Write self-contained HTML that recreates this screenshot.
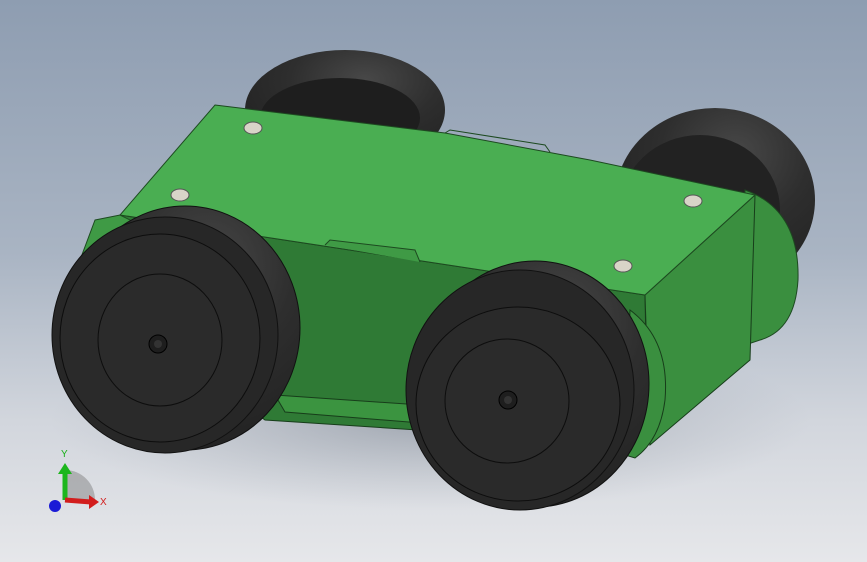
<!DOCTYPE html>
<html><head><meta charset="utf-8"><style>
html,body{margin:0;padding:0;width:867px;height:562px;overflow:hidden}
body{background:linear-gradient(180deg,#8e9db1 0%,#a9b4c3 45%,#d2d6dd 75%,#e6e7ea 100%)}
svg{position:absolute;left:0;top:0}
</style></head><body>
<svg width="867" height="562" viewBox="0 0 867 562" xmlns="http://www.w3.org/2000/svg" font-family="Liberation Sans, sans-serif">
<defs>
<radialGradient id="sh" cx="50%" cy="50%" r="50%"><stop offset="0" stop-color="#7f8793" stop-opacity=".6"/><stop offset="1" stop-color="#9aa2ad" stop-opacity="0"/></radialGradient>
<radialGradient id="tire" cx="60%" cy="25%" r="75%"><stop offset="0" stop-color="#484848"/><stop offset=".5" stop-color="#2e2e2e"/><stop offset="1" stop-color="#222"/></radialGradient>
</defs>
<ellipse cx="430" cy="420" rx="380" ry="90" fill="url(#sh)"/>
<!-- back left wheel -->
<ellipse cx="345" cy="110" rx="100" ry="60" fill="url(#tire)"/>
<ellipse cx="340" cy="118" rx="80" ry="40" fill="#1e1e1e"/>
<!-- back right wheel -->
<ellipse cx="715" cy="200" rx="100" ry="92" fill="url(#tire)"/>
<ellipse cx="700" cy="210" rx="80" ry="75" fill="#222"/>
<!-- right side panel -->
<path d="M745 190 Q800 210 798 280 Q795 330 760 340 L745 345 Z" fill="#3a8f3f" stroke="#1d4a20"/>
<!-- body side (front face) -->
<path d="M120 215 L645 295 L648 445 L265 420 L100 300 Z" fill="#2f7a35" stroke="#173d1a"/>
<!-- body right face -->
<path d="M645 295 L755 195 L750 360 L650 445 Z" fill="#3a8f3f" stroke="#173d1a"/>
<!-- body top -->
<path d="M215 105 L420 130 L445 133 L590 160 L755 195 L645 295 L120 215 Z" fill="#4aae52" stroke="#1d4a20"/>
<path d="M445 133 L450 130 L545 145 L550 152" fill="none" stroke="#1d4a20"/>
<path d="M325 245 L330 240 L415 250 L420 262" fill="#3f9a45" stroke="#1d4a20"/>
<!-- left wing -->
<path d="M95 220 L120 215 L140 225 L90 300 L80 260 Z" fill="#3f9a45" stroke="#1d4a20"/>
<!-- screws -->
<g fill="#d8d4c8" stroke="#555">
<ellipse cx="253" cy="128" rx="9" ry="6"/><ellipse cx="180" cy="195" rx="9" ry="6"/>
<ellipse cx="693" cy="201" rx="9" ry="6"/><ellipse cx="623" cy="266" rx="9" ry="6"/>
</g>
<!-- bottom tab -->
<path d="M275 395 L640 420 L630 440 L285 412 Z" fill="#3b9440" stroke="#173d1a"/>
<path d="M630 310 Q670 340 665 400 Q660 440 635 458 L625 455 Z" fill="#3a8f3f" stroke="#173d1a"/>
<!-- front left wheel -->
<ellipse cx="185" cy="328" rx="115" ry="122" fill="url(#tire)" stroke="#111"/>
<ellipse cx="165" cy="335" rx="113" ry="118" fill="#272727" stroke="#111"/>
<ellipse cx="160" cy="338" rx="100" ry="104" fill="#2a2a2a" stroke="#0d0d0d"/>
<ellipse cx="160" cy="340" rx="62" ry="66" fill="#2b2b2b" stroke="#0d0d0d"/>
<ellipse cx="158" cy="344" rx="9" ry="9" fill="#1e1e1e" stroke="#000"/>
<ellipse cx="158" cy="344" rx="4" ry="4" fill="#333"/>
<!-- front right wheel -->
<ellipse cx="535" cy="384" rx="114" ry="123" fill="url(#tire)" stroke="#111"/>
<ellipse cx="520" cy="390" rx="114" ry="120" fill="#272727" stroke="#111"/>
<ellipse cx="518" cy="404" rx="102" ry="97" fill="#2a2a2a" stroke="#0d0d0d"/>
<ellipse cx="507" cy="401" rx="62" ry="62" fill="#2b2b2b" stroke="#0d0d0d"/>
<ellipse cx="508" cy="400" rx="9" ry="9" fill="#1e1e1e" stroke="#000"/>
<ellipse cx="508" cy="400" rx="4" ry="4" fill="#333"/>
<!-- triad -->
<path d="M65 500 L65 470 A30 30 0 0 1 95 500 Z" fill="#777" opacity=".45"/>
<line x1="65" y1="500" x2="65" y2="472" stroke="#1cb61c" stroke-width="5"/>
<path d="M58 474 L65 463 L72 474 Z" fill="#1cb61c"/>
<line x1="65" y1="500" x2="91" y2="502" stroke="#d21d1d" stroke-width="5"/>
<path d="M89 495 L99 502 L89 509 Z" fill="#d21d1d"/>
<circle cx="55" cy="506" r="6" fill="#1a1ad6"/>
<text x="61" y="457" font-size="10" fill="#19b019">Y</text>
<text x="100" y="505" font-size="10" fill="#d21d1d">X</text>
</svg>
</body></html>
